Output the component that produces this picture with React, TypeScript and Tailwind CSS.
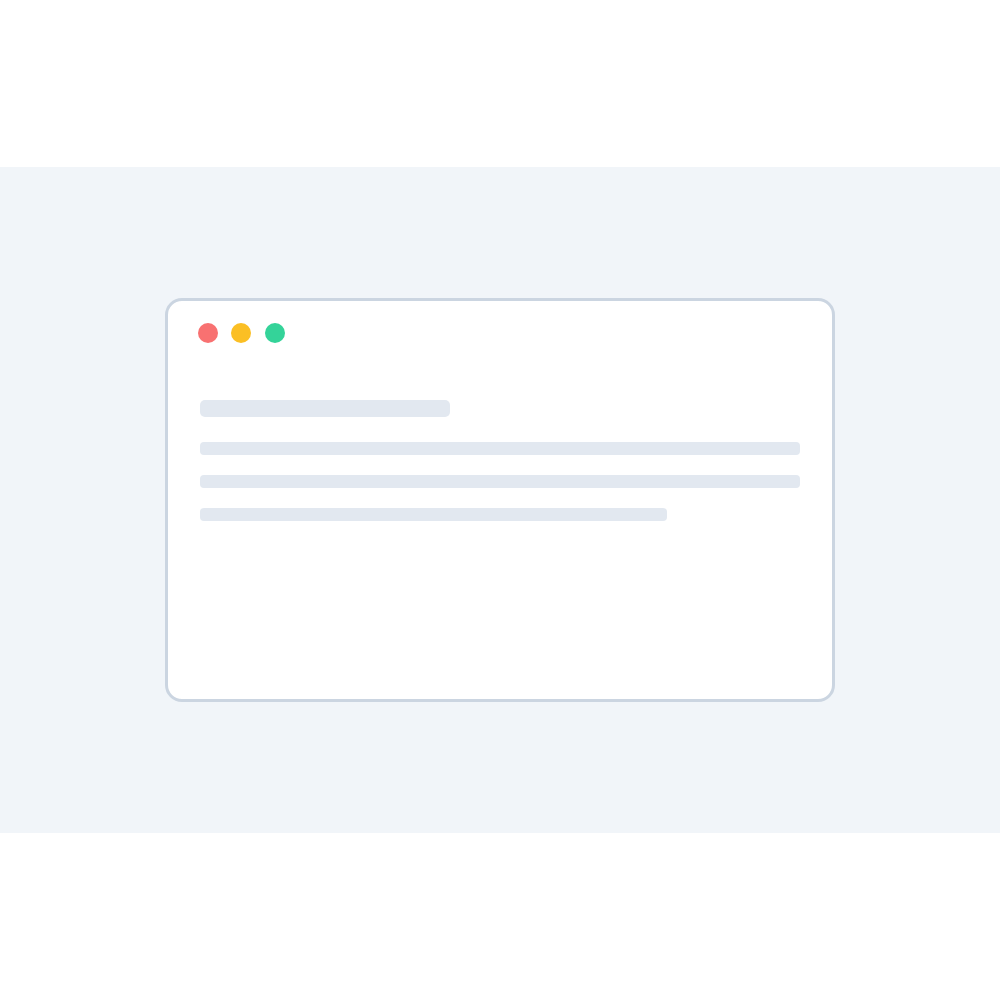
import React from 'react';

const Dot: React.FC<{ color: string }> = ({ color }) => (
  <div className={`w-5 h-5 rounded-full ${color}`} />
);

export default function App() {
  return (
    <div className="w-[1000px] h-[1000px] bg-white pt-[167px]">
      <div className="h-[666px] bg-[#f1f5f9] flex items-center justify-center">
        {/* Window mockup */}
        <div className="w-[670px] h-[404px] bg-white border-[3px] border-[#cbd5e1] rounded-[17px] pl-[30px] pt-[22px]">
          <div className="flex gap-[13.4px]">
            <Dot color="bg-[#f87171]" />
            <Dot color="bg-[#fbbf24]" />
            <Dot color="bg-[#34d399]" />
          </div>

          <div className="ml-[2px] mt-[57px] flex flex-col">
            <div className="w-[250px] h-[17px] rounded-[5px] bg-[#e2e8f0]" />
            <div className="mt-[25px] w-[600px] h-[13px] rounded-[4px] bg-[#e2e8f0]" />
            <div className="mt-[20px] w-[600px] h-[13px] rounded-[4px] bg-[#e2e8f0]" />
            <div className="mt-[20px] w-[467px] h-[13px] rounded-[4px] bg-[#e2e8f0]" />
          </div>
        </div>
      </div>
    </div>
  );
}
